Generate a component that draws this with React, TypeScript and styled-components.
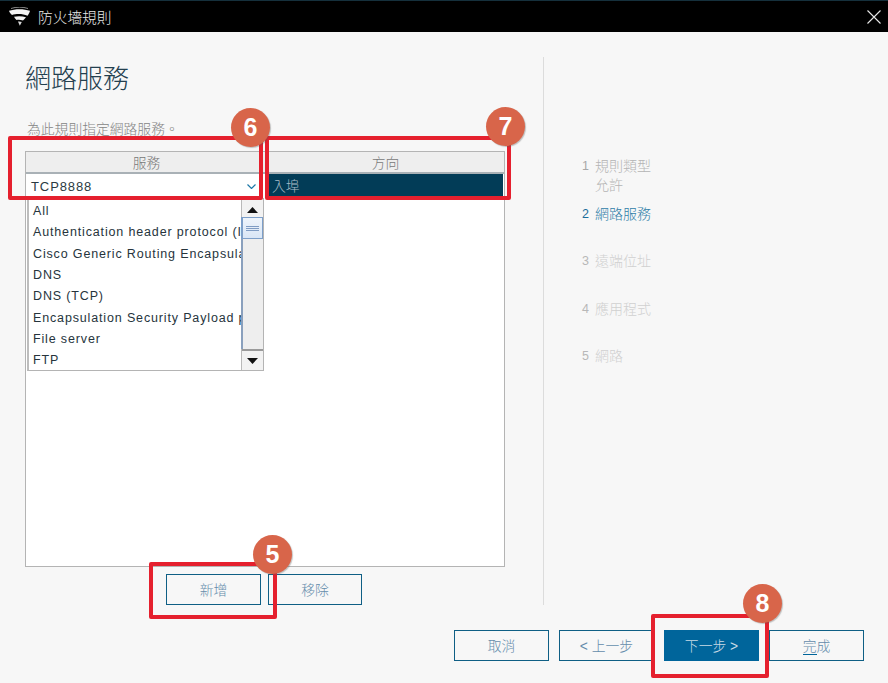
import React from "react";
import styled, { createGlobalStyle } from "styled-components";

const Global = createGlobalStyle`
  html, body { margin: 0; padding: 0; background: #f7f7f7; }
  * { box-sizing: border-box; }
`;
const FONT = `"Liberation Sans", "Noto Sans CJK TC", sans-serif`;

const Page = styled.div`
  position: relative; width: 888px; height: 683px; overflow: hidden;
  background: #f7f7f7; font-family: ${FONT}; display: flex; flex-direction: column;
`;
const TitleBar = styled.header`
  height: 32px; flex: none; background: #000; border-top: 1px solid #15303c;
  display: flex; align-items: center; padding: 0 7px 0 9px; color: #e8e8e8; font-size: 14.7px;
`;
const TitleText = styled.span`margin-left: 8px; font-weight: 300; flex: 1;`;
const Content = styled.div`flex: 1; display: grid; grid-template-columns: 543px 1fr; grid-template-rows: 573px auto; min-height: 0;`;
const Left = styled.main`padding: 33px 0 0 25px; display: flex; flex-direction: column;`;
const Heading = styled.h1`margin: 0; font-size: 26px; line-height: 28px; font-weight: 300; color: #24404f; height: 28px;`;
const Sub = styled.p`margin: 29px 0 0 2px; height: 16px; font-size: 13.8px; line-height: 16px; color: #858585; font-weight: 300;`;
const Table = styled.div`
  position: relative; margin-top: 13px; width: 480px; height: 416px; background: #fff; border: 1px solid #b4b4b4;
`;
const HeaderRow = styled.div`
  display: grid; grid-template-columns: 240px 238px; height: 22px; background: #eeeeee; border-bottom: 2px solid #a9b1b6;
`;
const HeaderCell = styled.div`
  text-align: center; font-size: 13.8px; line-height: 24px; color: #787878; font-weight: 300; border-right: 1px solid #b4b4b4;
  padding-left: 2px;
  &:last-child { border-right: 0; padding-left: 1px; }
`;
const BodyRow = styled.div`display: grid; grid-template-columns: 240px 238px; height: 24px;`;
const Combo = styled.div`
  display: flex; align-items: center; justify-content: space-between; padding: 0 10px 0 5px;
  font-size: 13px; letter-spacing: 0.9px; color: #2b3a42; background: #fff;
`;
const DirCell = styled.div`
  background: #023c57; color: #a9bdc7; font-size: 13.8px; line-height: 25px; padding-left: 6px; margin-right: 1px; font-weight: 300;
`;
const Dropdown = styled.div`
  position: absolute; left: 1px; top: 46px; width: 237px; height: 173px; background: #fff;
  border: 1px solid #b4b4b4; border-top: 0; border-left: 2px solid #bdbdbd; display: flex;
`;
const List = styled.ul`flex: 1; margin: 0; padding: 3px 0 0 4px; list-style: none; overflow: hidden; min-width: 0;`;
const Item = styled.li`
  height: 21.35px; line-height: 21px; font-size: 12.5px; letter-spacing: 0.85px; color: #26343c; white-space: nowrap;
`;
const ScrollBar = styled.div`
  width: 22px; flex: none; background: #eeeeee; border-left: 1px solid #b9b9b9; display: flex; flex-direction: column;
`;
const ScrollUp = styled.div`height: 19px; background: #f2f2f2; display: flex; align-items: center; justify-content: center; padding-top: 5px;`;
const ScrollDown = styled.div`height: 21px; background: #f2f2f2; display: flex; align-items: center; justify-content: center; border-top: 2px solid #9a9a9a;`;
const Thumb = styled.div`
  height: 22px; margin-left: -1px; border: 1px solid #7d9fc9; border-left-width: 2px;
  background: linear-gradient(180deg, #eef4fb, #d9e6f6); display: flex; flex-direction: column;
  align-items: center; justify-content: center; gap: 1px;
`;
const Grip = styled.i`display: block; width: 13px; height: 1px; background: #7f9cc4;`;
const Track = styled.div`flex: 1; border-left: 2px solid #8aa0bd; margin-left: -1px;`;
const AddRow = styled.div`display: flex; gap: 7px; margin: 7px 0 0 141px; button:last-child { width: 94px; }`;
const Button = styled.button<{ $primary?: boolean }>`
  width: 95px; height: 31px; padding: 2px 0 0; border: 1px solid #0f5f85; border-radius: 0;
  background: ${(p) => (p.$primary ? "#00659b" : "transparent")};
  color: ${(p) => (p.$primary ? "#c9dbe6" : "#648cab")};
  font-family: ${FONT}; font-size: 13.8px; line-height: 28px; font-weight: 300;
  ${(p) => p.$primary && "border-color:#00659b;"}
`;
const Under = styled.span`border-bottom: 1px solid #00659b; line-height: 15px; display: inline-block;`;
const Right = styled.aside`display: flex; padding-top: 25px;`;
const Divider = styled.div`width: 1px; height: 548px; background: #dcdcdc; flex: none;`;
const Steps = styled.ol`margin: 0; padding: 100px 0 0 38px; list-style: none; width: 200px;`;
const Step = styled.li<{ $h: number; $active?: boolean; $faint?: boolean }>`
  display: flex; gap: 7px; height: ${(p) => p.$h}px; font-size: 14px; line-height: 19px; font-weight: 300;
  color: ${(p) => (p.$active ? "#2f7ea8" : p.$faint ? "#d0d0d0" : "#b4b4b4")};
`;
const StepNum = styled.span<{ $active?: boolean; $faint?: boolean }>`
  width: 6px; font-size: 12.5px; flex: none; font-weight: 400;
  color: ${(p) => (p.$active ? "#1b6d9b" : p.$faint ? "#b8b8b8" : "#a8a8a8")};
`;
const Footer = styled.footer`grid-column: 1 / -1; display: flex; justify-content: flex-end; gap: 10px; padding: 25px 24px 0 0;`;
const RedBox = styled.div<{ $l: number; $t: number; $w: number; $h: number }>`
  position: absolute; left: ${(p) => p.$l}px; top: ${(p) => p.$t}px; width: ${(p) => p.$w}px; height: ${(p) => p.$h}px;
  border: 4px solid #e5202e; border-radius: 2px; pointer-events: none;
`;
const Badge = styled.div<{ $l: number; $t: number }>`
  position: absolute; left: ${(p) => p.$l}px; top: ${(p) => p.$t}px; width: 39px; height: 39px; border-radius: 50%;
  background: #d8654a; color: #fff; font: 700 25px/39px "Liberation Sans", sans-serif; text-align: center;
  box-shadow: 1px 1px 1px rgba(90,90,90,.35);
`;

const Logo = () => (
  <svg width="21" height="19" viewBox="0 0 21 19">
    <path d="M2 1.500C7 -0.300 14 -0.300 19 1.500" stroke="#888" strokeWidth="1" fill="none" />
    <path fill="#f2f2f2" d="M0 3.800C6 1.600 15 1.600 21 3.800C20.500 6 19.500 7.500 18.500 8.700C14 6.600 7 6.600 3 8C1.500 7 .5 5.500 0 3.800Z" />
    <path fill="#f2f2f2" d="M5 9.800C9 8.700 13.500 9 17 10.300C16 11.600 15 12.700 14 13.600C11.500 12.700 9.500 12.600 7.500 13C6.500 12 5.700 11 5 9.800Z" />
    <path fill="#d8d8d8" d="M9 14.500C10.500 14.300 11.700 14.500 12.800 15L10.800 18.800Z" />
  </svg>
);
const CloseIcon = () => (
  <svg width="14" height="14" viewBox="0 0 14 14" stroke="#e8e8e8" strokeWidth="1.1" fill="none">
    <path d="M0.500 0.500L13.500 13.500M13.500 0.500L0.500 13.500" />
  </svg>
);
const Chevron = () => (
  <svg width="9" height="5" viewBox="0 0 9 5" stroke="#1d78a8" strokeWidth="1.2" fill="none">
    <path d="M0.500 0.500L4.500 4.500L8.500 0.500" />
  </svg>
);
const Arrow = ({ up }: { up?: boolean }) => (
  <svg width="11" height="6" viewBox="0 0 11 6" fill="#111">
    <path d={up ? "M0 6L5.500 0L11 6Z" : "M0 0L5.500 6L11 0Z"} />
  </svg>
);

const services = [
  "All",
  "Authentication header protocol (IPv6)",
  "Cisco Generic Routing Encapsulation",
  "DNS",
  "DNS (TCP)",
  "Encapsulation Security Payload protocol",
  "File server",
  "FTP",
];

export default function App() {
  return (
    <Page>
      <Global />
      <TitleBar>
        <Logo />
        <TitleText>防火墻規則</TitleText>
        <CloseIcon />
      </TitleBar>
      <Content>
        <Left>
          <Heading>網路服務</Heading>
          <Sub>為此規則指定網路服務。</Sub>
          <Table>
            <HeaderRow>
              <HeaderCell>服務</HeaderCell>
              <HeaderCell>方向</HeaderCell>
            </HeaderRow>
            <BodyRow>
              <Combo>TCP8888<Chevron /></Combo>
              <DirCell>入埠</DirCell>
            </BodyRow>
            <Dropdown>
              <List>
                {services.map((s) => <Item key={s}>{s}</Item>)}
              </List>
              <ScrollBar>
                <ScrollUp><Arrow up /></ScrollUp>
                <Thumb><Grip /><Grip /><Grip /></Thumb>
                <Track />
                <ScrollDown><Arrow /></ScrollDown>
              </ScrollBar>
            </Dropdown>
          </Table>
          <AddRow>
            <Button>新增</Button>
            <Button>移除</Button>
          </AddRow>
        </Left>
        <Right>
          <Divider />
          <Steps>
            <Step $h={48}><StepNum>1</StepNum><span>規則類型<br />允許</span></Step>
            <Step $h={47} $active><StepNum $active>2</StepNum><span>網路服務</span></Step>
            <Step $h={48} $faint><StepNum $faint>3</StepNum><span>遠端位址</span></Step>
            <Step $h={47} $faint><StepNum $faint>4</StepNum><span>應用程式</span></Step>
            <Step $h={20} $faint><StepNum $faint>5</StepNum><span>網路</span></Step>
          </Steps>
        </Right>
        <Footer>
          <Button>取消</Button>
          <Button>&lt; 上一步</Button>
          <Button $primary>下一步 &gt;</Button>
          <Button><Under>完</Under>成</Button>
        </Footer>
      </Content>
      <RedBox $l={8} $t={136} $w={255} $h={64} />
      <RedBox $l={265} $t={136} $w={246} $h={64} />
      <RedBox $l={149} $t={562} $w={128} $h={57} />
      <RedBox $l={651} $t={614} $w={118} $h={64} />
      <Badge $l={231} $t={108}>6</Badge>
      <Badge $l={486} $t={107}>7</Badge>
      <Badge $l={253} $t={535}>5</Badge>
      <Badge $l={743} $t={584}>8</Badge>
    </Page>
  );
}
